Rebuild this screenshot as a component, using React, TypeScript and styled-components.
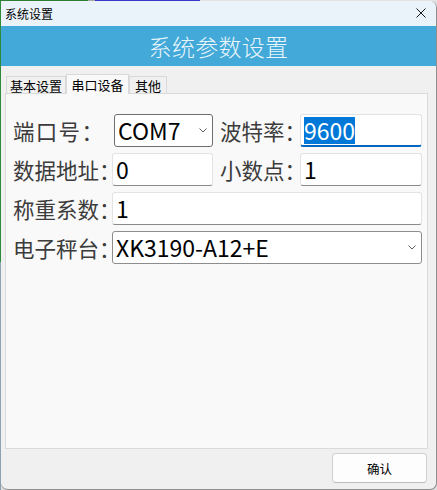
import React from "react";
import styled, { createGlobalStyle } from "styled-components";

const Global = createGlobalStyle`
  html, body { margin: 0; padding: 0; }
  body {
    width: 437px;
    height: 490px;
    overflow: hidden;
    font-family: "Noto Sans CJK SC", "Noto Sans", sans-serif;
    background:
      linear-gradient(to right, #2d7d34 0 88px, #a8a8a8 88px 95px, #3437c8 95px 200px, #e4e4e4 200px) top left / 100% 1px no-repeat,
      linear-gradient(to bottom, #2f8a3a 0 262px, #8ea2b4 262px) top left / 1px 100% no-repeat,
      #dedede;
  }
`;

const Window = styled.div`
  margin: 1px 0 0 1px;
  width: 435px;
  height: 488px;
  border-right: 1px solid #8f8f8f;
  border-bottom: 1px solid #8f8f8f;
  border-radius: 0 7px 7px 7px;
  background: #f0f0f0;
  overflow: hidden;
  display: flex;
  flex-direction: column;
`;

const TitleBar = styled.div`
  height: 25px;
  flex: none;
  background: #ebf3fa;
  display: flex;
  align-items: center;
  justify-content: space-between;
  padding: 0 10px 0 4px;
`;

const TitleText = styled.span`
  font-size: 12px;
  color: #000;
  line-height: 1;
`;

const CloseIcon = styled.svg`
  width: 10px;
  height: 10px;
  margin-bottom: 1px;
`;

const Banner = styled.div`
  height: 40px;
  flex: none;
  background: #42a9d9;
  color: #eaf6fb;
  font-size: 23px;
  font-weight: 300;
  display: flex;
  align-items: center;
  justify-content: center;
  letter-spacing: 0.3px;
`;

const Body = styled.div`
  flex: 1;
  display: flex;
  flex-direction: column;
  padding: 7px 8px 0 4px;
`;

const TabRow = styled.div`
  display: flex;
  align-items: flex-end;
  height: 20px;
  padding-left: 1px;
`;

const Tab = styled.div<{ $active?: boolean; $w: number }>`
  width: ${(p) => p.$w}px;
  height: ${(p) => (p.$active ? 20 : 17)}px;
  box-sizing: border-box;
  background: ${(p) => (p.$active ? "#f9f9f9" : "#f0f0f0")};
  border: 1px solid #d9d9d9;
  border-bottom: none;
  margin-bottom: ${(p) => (p.$active ? "-1px" : "0")};
  position: relative;
  z-index: ${(p) => (p.$active ? 1 : 0)};
  font-size: 13px;
  color: #000;
  display: flex;
  align-items: center;
  justify-content: center;
  line-height: 1;
  padding-top: ${(p) => (p.$active ? "0" : "1px")};
`;

const Panel = styled.div`
  height: 356px;
  box-sizing: border-box;
  background: #f9f9f9;
  border: 1px solid #dadada;
  padding: 20px 4px 0 7px;
`;

const Form = styled.div`
  display: grid;
  grid-template-columns: 99px 101px 87px 122px;
  grid-auto-rows: 33px;
  row-gap: 6px;
  align-items: center;
`;

const Label = styled.div<{ $spacing?: number; $indent?: number }>`
  font-size: 21.5px;
  color: #3c3c3c;
  white-space: nowrap;
  letter-spacing: ${(p) => p.$spacing ?? 0}px;
  padding-left: ${(p) => p.$indent ?? 0}px;
  line-height: 1;
`;

const Colon = styled.span`
  font-feature-settings: "halt" 1;
  letter-spacing: 0;
`;

const Field = styled.div<{ $wide?: boolean; $focused?: boolean; $offset?: number }>`
  grid-column: ${(p) => (p.$wide ? "2 / 5" : "auto")};
  height: 33px;
  box-sizing: border-box;
  margin-left: ${(p) => p.$offset ?? 0}px;
  background: #ffffff;
  border: 1px solid #e3e3e3;
  border-bottom: ${(p) => (p.$focused ? "2px solid #0067c0" : "1px solid #8a8a8a")};
  border-radius: 3px;
  display: flex;
  align-items: center;
  padding: 0 3px;
  font-size: 23px;
  color: #000;
  line-height: 1;
`;

const Combo = styled.div<{ $wide?: boolean; $dark?: boolean; $offset?: number }>`
  grid-column: ${(p) => (p.$wide ? "2 / 5" : "auto")};
  height: 33px;
  box-sizing: border-box;
  margin-left: ${(p) => p.$offset ?? 0}px;
  background: #ffffff;
  border: 1px solid ${(p) => (p.$dark ? "#6e6e6e" : "#8d8d8d")};
  border-radius: 3px;
  display: flex;
  align-items: center;
  justify-content: space-between;
  padding: 0 5px 0 3px;
  font-size: 23px;
  color: #000;
  line-height: 1;
`;

const Selected = styled.span`
  background: #0078d7;
  color: #fff;
  padding: 2px 0;
`;

const Chevron = styled.svg`
  width: 8px;
  height: 5px;
  flex: none;
`;

const Footer = styled.div`
  flex: 1;
  display: flex;
  justify-content: flex-end;
  align-items: flex-start;
  padding: 4px 1px 0 0;
`;

const Button = styled.button`
  width: 95px;
  height: 30px;
  box-sizing: border-box;
  background: #fdfdfd;
  border: 1px solid #d0d0d0;
  border-bottom-color: #bdbdbd;
  border-radius: 4px;
  font-family: "Noto Sans CJK SC", "Noto Sans", sans-serif;
  font-size: 12.5px;
  color: #000;
  padding: 0;
`;

const Arrow = () => (
  <Chevron viewBox="0 0 8 5">
    <path d="M0.5 0.5 L4 4 L7.5 0.5" fill="none" stroke="#5f5f5f" strokeWidth="1" />
  </Chevron>
);

export default function App() {
  return (
    <>
      <Global />
      <Window>
        <TitleBar>
          <TitleText>系统设置</TitleText>
          <CloseIcon viewBox="0 0 10 10">
            <path d="M0.5 0.5 L9.5 9.5 M9.5 0.5 L0.5 9.5" stroke="#1a1a1a" strokeWidth="1" />
          </CloseIcon>
        </TitleBar>
        <Banner>系统参数设置</Banner>
        <Body>
          <TabRow>
            <Tab $w={60}>基本设置</Tab>
            <Tab $w={63} $active>串口设备</Tab>
            <Tab $w={38}>其他</Tab>
          </TabRow>
          <Panel>
            <Form>
              <Label $spacing={1.3}>端口号<Colon>：</Colon></Label>
              <Combo $dark $offset={2}>
                <span>COM7</span>
                <Arrow />
              </Combo>
              <Label $indent={7}>波特率<Colon>：</Colon></Label>
              <Field $focused>
                <Selected>9600</Selected>
              </Field>

              <Label>数据地址<Colon>：</Colon></Label>
              <Field>0</Field>
              <Label $indent={7}>小数点<Colon>：</Colon></Label>
              <Field>1</Field>

              <Label>称重系数<Colon>：</Colon></Label>
              <Field $wide>1</Field>

              <Label>电子秤台<Colon>：</Colon></Label>
              <Combo $wide>
                <span>XK3190-A12+E</span>
                <Arrow />
              </Combo>
            </Form>
          </Panel>
          <Footer>
            <Button>确认</Button>
          </Footer>
        </Body>
      </Window>
    </>
  );
}
